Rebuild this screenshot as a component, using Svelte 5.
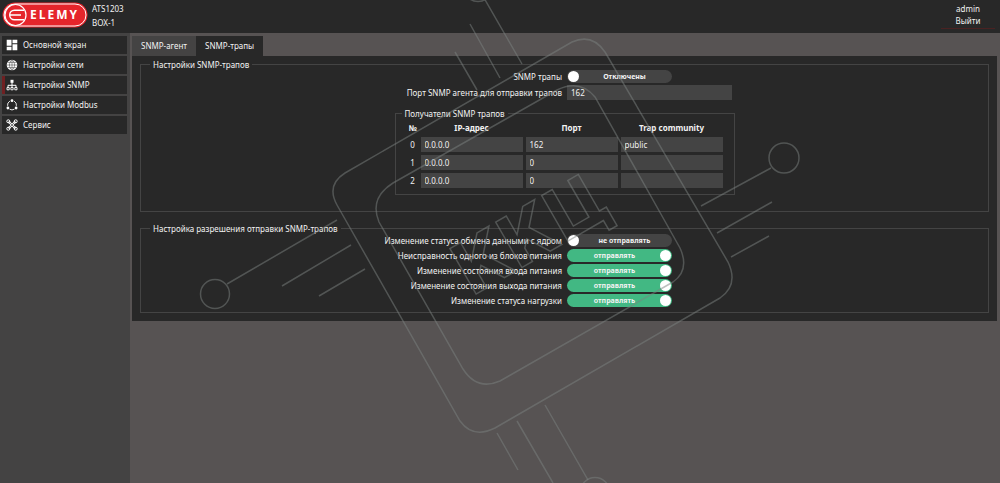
<script lang="ts">
  const menu = [
    { icon: "dashboard", label: "Основной экран" },
    { icon: "globe", label: "Настройки сети" },
    { icon: "tree", label: "Настройки SNMP", active: true },
    { icon: "ring", label: "Настройки Modbus" },
    { icon: "tools", label: "Сервис" },
  ];

  let trapsEnabled = $state(false);
  let trapPort = $state("162");

  let receivers = $state([
    { ip: "0.0.0.0", port: "162", community: "public" },
    { ip: "0.0.0.0", port: "0", community: "" },
    { ip: "0.0.0.0", port: "0", community: "" },
  ]);

  let permissions = $state([
    { label: "Изменение статуса обмена данными с ядром", on: false },
    { label: "Неисправность одного из блоков питания", on: true },
    { label: "Изменение состояния входа питания", on: true },
    { label: "Изменение состояния выхода питания", on: true },
    { label: "Изменение статуса нагрузки", on: true },
  ]);
</script>

<div class="app">
  <header>
    <svg class="logo" viewBox="0 0 86 26" role="img" aria-label="ELEMY">
      <rect x="0.5" y="0.5" width="85" height="25" rx="12.5" fill="#e5252b" />
      <rect x="2" y="2" width="82" height="22" rx="11" fill="none" stroke="#fff" stroke-width="1" />
      <circle cx="13.5" cy="13" r="10.5" fill="none" stroke="#fff" stroke-width="1.2" />
      <path d="M22 8.2H12.5a4.8 4.8 0 0 0 0 9.6H22M8 13h11" fill="none" stroke="#fff" stroke-width="1.4" />
      <text x="28" y="17">ELEMY</text>
    </svg>
    <div class="device">
      <span>ATS1203</span>
      <span>BOX-1</span>
    </div>
    <div class="user">
      <span>admin</span>
      <button type="button">Выйти</button>
    </div>
  </header>

  <div class="body">
    <nav>
      {#each menu as item}
        <a href="#{item.icon}" class:active={item.active}>
          <svg viewBox="0 0 12 12" aria-hidden="true">
            {#if item.icon === "dashboard"}
              <path d="M.7.7h4.8v6H.7zM6.5.7h4.8v3.6H6.5zM.7 7.7h4.8v3.6H.7zM6.5 5.3h4.8v6H6.5z" fill="#fff" />
            {:else if item.icon === "globe"}
              <circle cx="6" cy="6" r="5.3" fill="#fff" />
              <path
                d="M6 .7v10.6M.7 6h10.6M1.6 3.4h8.8M1.6 8.6h8.8M6 .7c-3.4 3-3.4 7.6 0 10.6M6 .7c3.4 3 3.4 7.6 0 10.6"
                fill="none"
                stroke="#333"
                stroke-width=".5"
              />
            {:else if item.icon === "tree"}
              <path d="M6 3v6M2 9V6.3h8V9" fill="none" stroke="#fff" stroke-width="1" />
              <path d="M4.5.8h3v3h-3z" fill="#fff" />
              <path d="M1 8.5h2.2v2.3H1zM4.9 8.5h2.2v2.3H4.9zM8.8 8.5H11v2.3H8.8z" fill="#282828" stroke="#fff" stroke-width=".9" />
            {:else if item.icon === "ring"}
              <path
                d="M3.9 2.1A4.6 4.6 0 0 0 1.6 6.8M8.1 2.1a4.6 4.6 0 0 1 2.3 4.7M3.6 10.2a4.6 4.6 0 0 0 4.8 0"
                fill="none"
                stroke="#fff"
                stroke-width=".9"
              />
              <circle cx="6" cy="1.7" r="1.4" fill="#fff" />
              <circle cx="1.9" cy="9" r="1.4" fill="#fff" />
              <circle cx="10.1" cy="9" r="1.4" fill="#fff" />
            {:else}
              <path d="M2.5 2.5l7 7M9.5 2.5l-7 7" stroke="#fff" stroke-width="2.2" />
              <path d="M2.5 2.5l7 7M9.5 2.5l-7 7" stroke="#282828" stroke-width=".6" />
              <g fill="none" stroke="#fff" stroke-width="1">
                <circle cx="2.3" cy="2.3" r="1.5" />
                <circle cx="9.7" cy="2.3" r="1.5" />
                <circle cx="2.3" cy="9.7" r="1.5" />
                <circle cx="9.7" cy="9.7" r="1.5" />
              </g>
            {/if}
          </svg>
          {item.label}
        </a>
      {/each}
    </nav>

    <main>
      <div class="tabs" role="tablist">
        <button type="button" role="tab" aria-selected="false">SNMP-агент</button>
        <button type="button" role="tab" aria-selected="true" class="selected">SNMP-трапы</button>
      </div>

      <div class="panel">
        <fieldset class="settings">
          <legend>Настройки SNMP-трапов</legend>
          <div class="row">
            <label for="traps">SNMP трапы</label>
            <div class="switch" class:on={trapsEnabled}>
              <input id="traps" type="checkbox" bind:checked={trapsEnabled} />
              <span>{trapsEnabled ? "Включены" : "Отключены"}</span>
            </div>
          </div>
          <div class="row">
            <label for="port">Порт SNMP агента для отправки трапов</label>
            <input id="port" class="field port" type="text" bind:value={trapPort} />
          </div>

          <fieldset class="receivers">
            <legend>Получатели SNMP трапов</legend>
            <table>
              <thead>
                <tr>
                  <th class="num">№</th>
                  <th class="wide">IP-адрес</th>
                  <th>Порт</th>
                  <th class="wide">Trap community</th>
                </tr>
              </thead>
              <tbody>
                {#each receivers as receiver, i}
                  <tr>
                    <td class="num">{i}</td>
                    <td><input class="field" type="text" aria-label="IP-адрес {i}" bind:value={receiver.ip} /></td>
                    <td><input class="field" type="text" aria-label="Порт {i}" bind:value={receiver.port} /></td>
                    <td><input class="field" type="text" aria-label="Trap community {i}" bind:value={receiver.community} /></td>
                  </tr>
                {/each}
              </tbody>
            </table>
          </fieldset>
        </fieldset>

        <fieldset class="permissions">
          <legend>Настройка разрешения отправки SNMP-трапов</legend>
          {#each permissions as permission, i}
            <div class="row">
              <label for="permission-{i}">{permission.label}</label>
              <div class="switch" class:on={permission.on}>
                <input id="permission-{i}" type="checkbox" bind:checked={permission.on} />
                <span>{permission.on ? "отправлять" : "не отправлять"}</span>
              </div>
            </div>
          {/each}
        </fieldset>
      </div>
    </main>
  </div>

  <svg class="watermark" viewBox="0 0 1000 483" preserveAspectRatio="xMidYMid slice" aria-hidden="true">
    <!-- chip body -->
    <path d="M345 173L572 42Q592 33 605 52L728 262Q739 285 720 298L495 428Q473 439 460 421L337 205Q326 185 345 173Z" />
    <path d="M393 183L557 90Q580 79 595 97L680 248Q690 270 673 282L500 381Q477 391 463 369L379 222Q369 198 393 183Z" />
    <!-- pins -->
    <path d="M484 -2L522 64M470 24L500 78M455 52L477 90" />
    <path d="M227 284L337 220M282 286L351 245M319 296L365 269" />
    <path d="M701 206L771 168M717 233L772 202M731 257L769 236" />
    <path d="M545 405L588 480M517 421L553 483M497 433L518 470" />
    <circle cx="478" cy="-13" r="14.5" />
    <circle cx="215" cy="294" r="14.5" />
    <circle cx="784" cy="158" r="15" />
    <circle cx="595" cy="492" r="14.5" />
    <text transform="translate(471 297) rotate(-30)">ККЦ</text>
  </svg>
</div>

<style>
  :global(body) {
    margin: 0;
    background: #575353;
  }

  .app {
    display: flex;
    flex-direction: column;
    min-height: 100vh;
    color: #f2f2f2;
    font-family: "Segoe UI", "Noto Sans", "Open Sans", sans-serif;
    font-size: 8px;
    line-height: 12px;
  }

  button,
  input {
    font: inherit;
    color: inherit;
    border: 0;
    margin: 0;
    box-sizing: border-box;
  }

  header {
    display: flex;
    height: 33px;
    background: #282828;
  }

  .logo {
    width: 86px;
    height: 26px;
    margin: 2px 4px 0 2px;
  }

  .logo text {
    fill: #fff;
    font-family: "Open Sans", sans-serif;
    font-size: 12px;
    font-weight: 700;
    letter-spacing: 2px;
  }

  .device {
    display: flex;
    flex-direction: column;
    gap: 2px;
    padding-top: 3px;
  }

  .user {
    display: flex;
    flex-direction: column;
    align-items: center;
    width: 54px;
    margin-left: auto;
    margin-right: 5px;
    padding-top: 3px;
  }

  .user button {
    width: 100%;
    padding: 0 0 1px;
    background: none;
    border-bottom: 1px solid #4a2222;
    cursor: pointer;
  }

  .body {
    display: flex;
    flex: 1;
  }

  nav {
    display: flex;
    flex-direction: column;
    gap: 2px;
    width: 130px;
    flex-shrink: 0;
    box-sizing: border-box;
    padding: 3px 3px 0 2px;
    background: #444343;
  }

  nav a {
    display: flex;
    align-items: center;
    gap: 5px;
    height: 18px;
    box-sizing: border-box;
    padding-left: 1px;
    border-left: 3px solid #282828;
    background: #282828;
    color: inherit;
    text-decoration: none;
  }

  nav a.active {
    border-left-color: #702022;
  }

  nav svg {
    width: 12px;
    height: 12px;
  }

  main {
    flex: 1;
    min-width: 0;
    padding: 3px 3px 0 2px;
  }

  .tabs {
    display: flex;
  }

  .tabs button {
    height: 20px;
    padding: 0 9px;
    background: #444343;
    cursor: pointer;
  }

  .tabs .selected {
    background: #282828;
  }

  .panel {
    padding: 3px 8px 8px;
    background: #282828;
  }

  fieldset {
    min-width: 0;
    margin: 0;
    padding: 0 9px;
    border: 1px solid #444;
  }

  legend {
    padding: 0 3px;
    line-height: 11px;
  }

  .settings {
    padding-bottom: 16px;
  }

  .permissions {
    margin-top: 11px;
    padding-bottom: 5px;
  }

  .row {
    display: grid;
    grid-template-columns: 1fr 1fr;
    gap: 5px;
    align-items: center;
  }

  .row + .row {
    margin-top: 2px;
  }

  .row label {
    text-align: right;
  }

  .switch {
    display: grid;
    width: 105px;
    height: 13px;
  }

  .switch input,
  .switch span {
    grid-area: 1 / 1;
  }

  .switch input {
    display: flex;
    align-items: center;
    appearance: none;
    padding: 0 1px;
    border-radius: 7px;
    background: #444;
    cursor: pointer;
  }

  .switch input::before {
    content: "";
    width: 11px;
    height: 11px;
    border-radius: 50%;
    background: #fff;
  }

  .switch span {
    padding-left: 10px;
    font-size: 7px;
    font-weight: 700;
    line-height: 13px;
    text-align: center;
    pointer-events: none;
  }

  .switch.on input {
    justify-content: flex-end;
    background: #42b883;
  }

  .switch.on span {
    padding-left: 0;
    padding-right: 10px;
  }

  .field {
    display: block;
    width: 100%;
    height: 15px;
    padding: 0 4px;
    background: #444;
    outline-color: #42b883;
  }

  .port {
    width: 165px;
  }

  .receivers {
    width: 340px;
    box-sizing: border-box;
    margin: 8px auto 0;
    padding: 0 9px 3px 6px;
  }

  table {
    width: 321px;
    margin-left: 3px;
    table-layout: fixed;
    border-spacing: 3px;
  }

  th,
  td {
    padding: 0;
    text-align: center;
  }

  .num {
    width: 10px;
  }

  .wide {
    width: 102px;
  }

  .watermark {
    position: fixed;
    inset: 0;
    width: 100%;
    height: 100%;
    fill: none;
    stroke: #7c8280;
    stroke-opacity: 0.5;
    stroke-width: 1.5;
    pointer-events: none;
  }

  .watermark text {
    font-family: "DejaVu Sans Condensed", "DejaVu Sans", sans-serif;
    font-size: 72px;
    font-weight: 700;
  }
</style>
